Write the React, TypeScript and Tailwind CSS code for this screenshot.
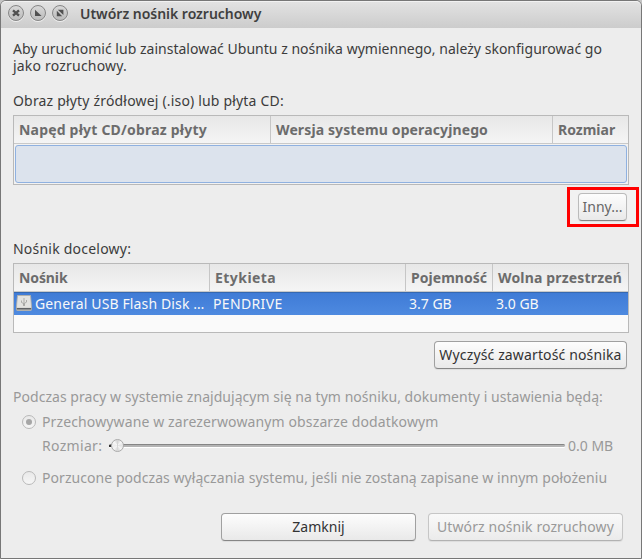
import type { ReactNode } from "react";
import clsx from "clsx";

function WindowButton({ children }: { children: ReactNode }) {
  return (
    <button className="flex size-4 items-center justify-center rounded-full border border-[#868686] bg-linear-to-b from-[#d8d8d8] to-[#bbbbbb] shadow-[0_1px_0_#eeeeee]">
      <svg width="14" height="14" viewBox="0 0 14 14" className="shrink-0">
        {children}
      </svg>
    </button>
  );
}

function TitleBar() {
  return (
    <header className="flex h-[27px] items-center gap-[6px] rounded-t-[5px] border-t border-[#f2f2f2] bg-linear-to-b from-[#e2e2e2] to-[#cccccc] pb-[4px] pl-[7px]">
      <WindowButton>
        <path d="M4 4.4 10 9.6M10 4.4 4 9.6" stroke="#505050" strokeWidth="2.4" />
      </WindowButton>
      <WindowButton>
        <path d="M4 3.8v6.2h6.6z" fill="#505050" />
      </WindowButton>
      <WindowButton>
        <path d="M4.8 3.8h5.6v5.2zM3.8 4.8v5.4h5.4z" fill="#505050" />
      </WindowButton>
      <h1 className="mt-[2px] ml-[6px] text-[14px] leading-[20px] font-semibold tracking-[-0.02px] text-[#3f3f3f]">
        Utwórz nośnik rozruchowy
      </h1>
    </header>
  );
}

function HeaderCell({ className, children }: { className: string; children: ReactNode }) {
  return (
    <div
      className={clsx(
        "shrink-0 border-[#c6c6c6] pl-[5px] leading-[28px] font-bold text-[#6c6c6c]",
        className,
      )}
    >
      {children}
    </div>
  );
}

function Button({
  className,
  disabled,
  children,
}: {
  className: string;
  disabled?: boolean;
  children: ReactNode;
}) {
  return (
    <button
      disabled={disabled}
      className={clsx(
        "flex h-[28px] shrink-0 items-center justify-center rounded-[4px] border bg-linear-to-b shadow-[0_1px_1px_rgba(0,0,0,0.07)]",
        disabled
          ? "border-[#c6c6c6] border-b-[#b2b2b2] from-[#f9f9f9] to-[#ebebeb] text-[#999999]"
          : "border-[#a0a0a0] border-b-[#868686] from-[#fdfdfd] to-[#e9e9e9] text-[#333333]",
        className,
      )}
    >
      {children}
    </button>
  );
}

function Radio({ checked }: { checked?: boolean }) {
  return (
    <span className="flex size-[14px] shrink-0 items-center justify-center rounded-full border border-[#b9b9b9] bg-linear-to-b from-[#e9e9e9] to-[#f6f6f6]">
      {checked && <span className="size-[6px] rounded-full bg-[#a6a6a6]" />}
    </span>
  );
}

function UsbDriveIcon() {
  return (
    <svg width="16" height="16" viewBox="0 0 16 16" className="mb-[2px] shrink-0">
      <path d="M1.5.5h13l1 11.5v2.5a1 1 0 0 1-1 1h-13a1 1 0 0 1-1-1V12z" fill="#d8d8d6" stroke="#b0b0ad" />
      <path d="M2 1h12l.8 11H1.2z" fill="#e3e3e1" />
      <path d="M.8 13h14.4v1.6H.8z" fill="#5f6266" />
      <path d="M8 3v7M5.5 5.5v2L8 8.7l2.5-1.6V5" fill="none" stroke="#a6a6a4" strokeWidth=".9" />
      <circle cx="8" cy="10" r="1.1" fill="#a0a09e" />
    </svg>
  );
}

export default function App() {
  return (
    <div className="h-[559px] w-[642px] bg-[#c4c4c4] font-['Noto_Sans','Open_Sans',sans-serif] text-[14px] leading-[20px] whitespace-nowrap text-[#3c3c3c]">
      <div className="flex h-full flex-col rounded-t-[6px] border border-[#777777] bg-[#ededed]">
        <TitleBar />

        <main className="flex flex-col px-[12px]">
          <div className="mt-[12px] leading-[17px]">
            <p className="tracking-[0.02px]">
              Aby uruchomić lub zainstalować Ubuntu z nośnika wymiennego, należy skonfigurować go
            </p>
            <p className="tracking-[0.2px]">jako rozruchowy.</p>
          </div>

          <p className="mt-[17px] tracking-[0.18px]">Obraz płyty źródłowej (.iso) lub płyta CD:</p>
          <section className="mt-[4px] flex h-[70px] flex-col border border-[#b9b9b9] bg-[#f2f2f2]">
            <div className="flex h-[28px] border-b border-[#c9c9c9] bg-linear-to-b from-[#e7e7e7] to-[#f5f5f5]">
              <HeaderCell className="w-[257px] border-r tracking-[0.2px]">Napęd płyt CD/obraz płyty</HeaderCell>
              <HeaderCell className="w-[282px] border-r tracking-[0.12px]">Wersja systemu operacyjnego</HeaderCell>
              <HeaderCell>Rozmiar</HeaderCell>
            </div>
            <div className="m-px h-[38px] rounded-[3px] border border-[#8fb1e0] bg-[#dce3ed]" />
          </section>

          <div className="mt-[2px] -mr-[10px] flex h-[40px] w-[72px] items-center justify-center self-end border-3 border-[#ff0000] bg-[#f1f1f1] pr-[1px]">
            <Button className="w-[49px] border-[#bbbbbb] border-b-[#9d9d9d] text-[#666666]">Inny...</Button>
          </div>

          <p className="mt-[12px] tracking-[0.22px]">Nośnik docelowy:</p>
          <section className="mt-[4px] flex h-[70px] flex-col border border-[#b9b9b9] bg-[#fafafa]">
            <div className="flex h-[28px] border-b border-[#c9c9c9] bg-linear-to-b from-[#e7e7e7] to-[#f5f5f5]">
              <HeaderCell className="w-[196px] border-r tracking-[-0.1px]">Nośnik</HeaderCell>
              <HeaderCell className="w-[196px] border-r tracking-[0.45px]">Etykieta</HeaderCell>
              <HeaderCell className="w-[87px] border-r tracking-[0.04px]">Pojemność</HeaderCell>
              <HeaderCell className="tracking-[0.17px]">Wolna przestrzeń</HeaderCell>
            </div>
            <div className="flex h-[23px] items-center border-t border-[#3568b0] bg-linear-to-b from-[#3f7bd6] to-[#4e8ae0] pl-[2px] text-[#f8f8f8]">
              <UsbDriveIcon />
              <span className="ml-[3px] w-[178px] tracking-[0.13px]">General USB Flash Disk …</span>
              <span className="w-[196px] tracking-[0.35px]">PENDRIVE</span>
              <span className="w-[87px]">3.7 GB</span>
              <span>3.0 GB</span>
            </div>
          </section>
          <Button className="mt-[8px] mr-[2px] w-[193px] self-end tracking-[0.14px]">Wyczyść zawartość nośnika</Button>

          <div className="mt-[18px] flex flex-col text-[#999999]">
            <p className="tracking-[0.038px]">
              Podczas pracy w systemie znajdującym się na tym nośniku, dokumenty i ustawienia będą:
            </p>
            <label className="mt-[5px] flex items-center gap-[6px] pl-[9px]">
              <Radio checked />
              <span className="tracking-[0.125px]">Przechowywane w zarezerwowanym obszarze dodatkowym</span>
            </label>
            <div className="mt-[4px] flex items-center pl-[29px]">
              <span className="w-[67px] tracking-[0.32px]">Rozmiar:</span>
              <div className="relative mb-[1px] h-[3px] w-[456px] rounded-full border-t border-[#858585] bg-[#b4b4b4] shadow-[0_1px_0_#ffffff]">
                <span className="absolute top-0 left-0 size-[2px] bg-[#333333]" />
                <span className="absolute -top-[6px] left-[2px] size-[13px] rounded-full border border-[#aaaaaa] bg-[conic-gradient(#d5d5d5,#f4f4f4,#e4e4e4,#f4f4f4,#d8d8d8,#f4f4f4,#eeeeee,#f6f6f6,#d5d5d5)]" />
              </div>
              <span className="ml-[3px]">0.0 MB</span>
            </div>
            <label className="mt-[12px] flex items-center gap-[6px] pl-[9px]">
              <Radio />
              <span className="tracking-[0.055px]">
                Porzucone podczas wyłączania systemu, jeśli nie zostaną zapisane w innym położeniu
              </span>
            </label>
          </div>

          <footer className="mt-[25px] mr-[6px] flex justify-end gap-[12px]">
            <Button className="w-[195px]">Zamknij</Button>
            <Button disabled className="w-[195px] tracking-[0.1px]">
              Utwórz nośnik rozruchowy
            </Button>
          </footer>
        </main>
      </div>
    </div>
  );
}
